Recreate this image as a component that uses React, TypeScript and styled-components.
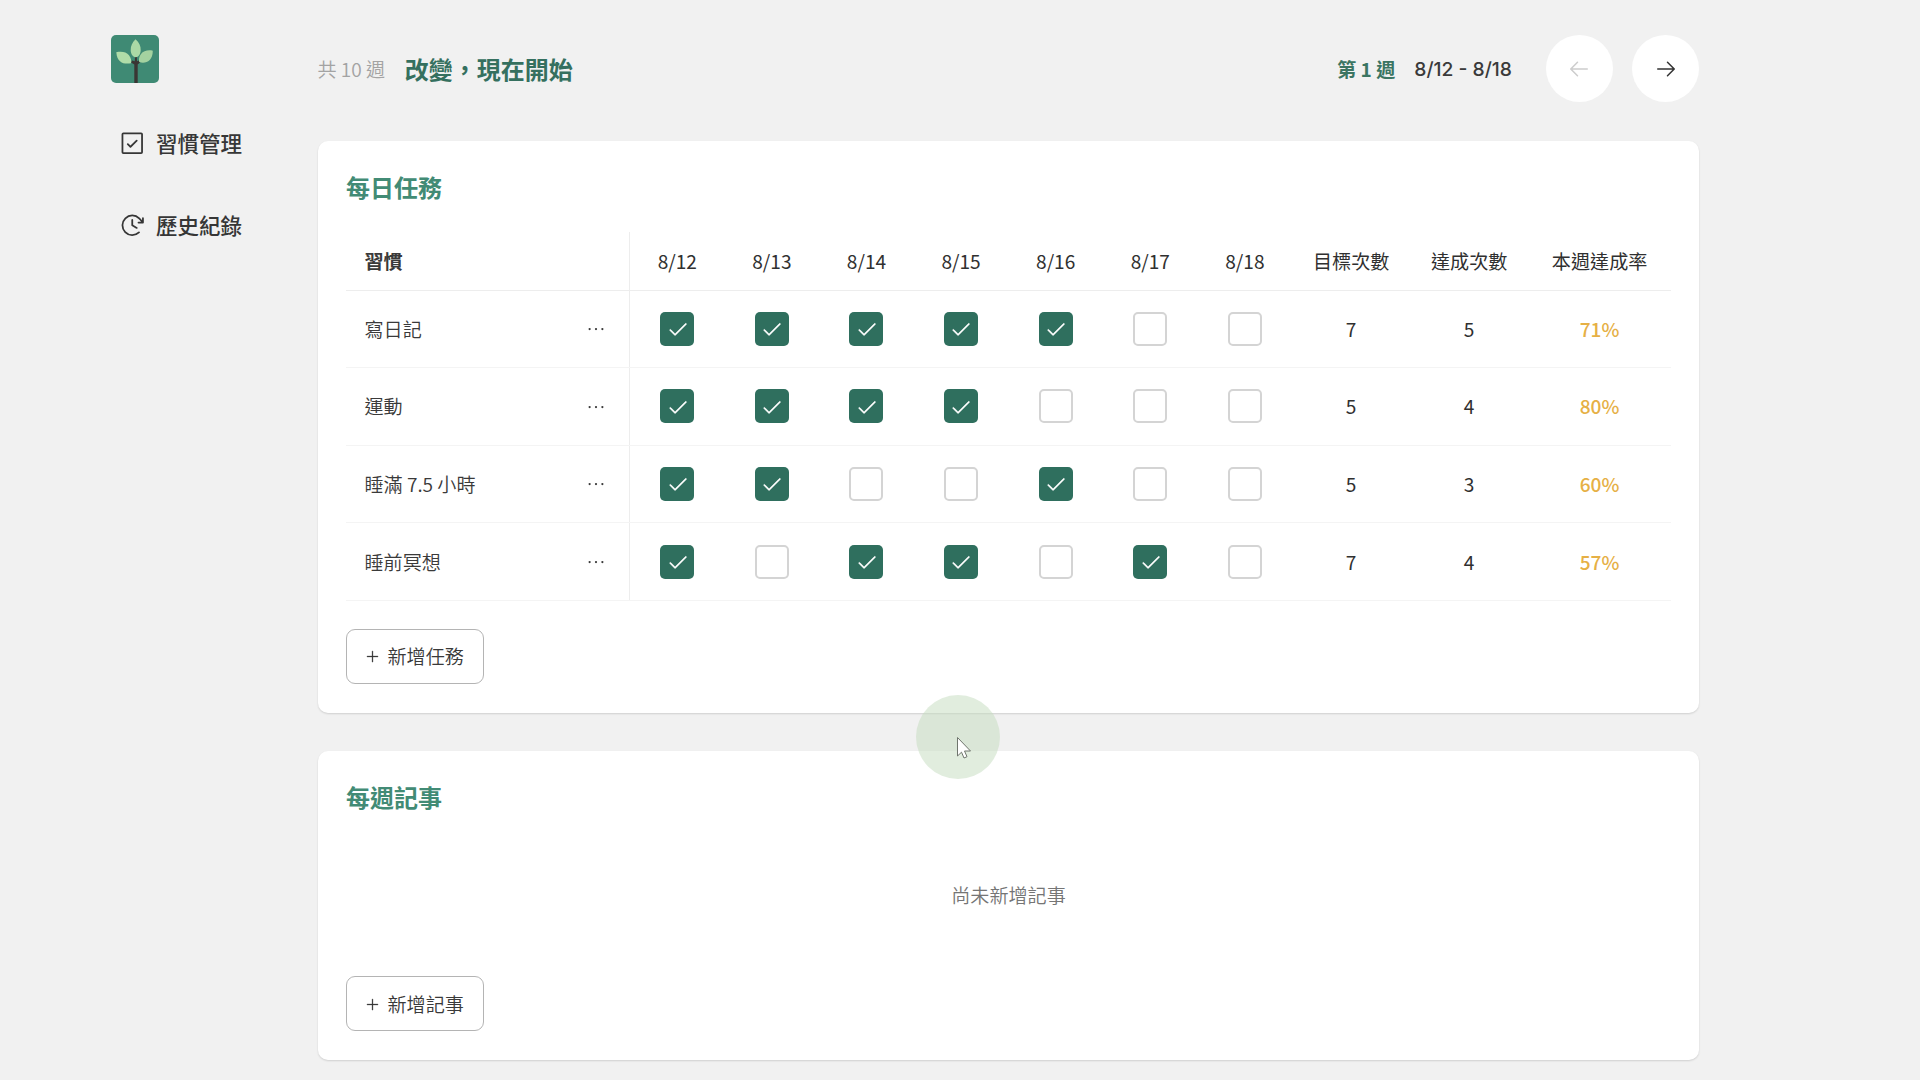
import React from "react";
import styled, { createGlobalStyle } from "styled-components";
import {
  PiArrowLeft,
  PiArrowRight,
  PiCheck,
  PiCheckSquare,
  PiClockClockwise,
  PiDotsThree,
  PiPlus,
} from "react-icons/pi";

const GlobalStyle = createGlobalStyle`
  * { box-sizing: border-box; }
  body {
    margin: 0;
    background: #f1f1f1;
    color: #3a3a3a;
    font-family: "Noto Sans CJK TC", "Noto Sans", sans-serif;
    font-size: 19.1px;
  }
`;

const Page = styled.div`
  position: relative;
  display: flex;
  width: 1920px;
  height: 1080px;
  overflow: hidden;
`;

const Sidebar = styled.aside`
  display: flex;
  flex-direction: column;
  width: 317.5px;
  padding: 35px 0 0 110.5px;
`;

const Logo = styled.svg`
  display: block;
  width: 48px;
  height: 48px;
  border-radius: 5px;
`;

const NavList = styled.nav`
  display: flex;
  flex-direction: column;
  gap: 42px;
  margin-top: 40px;
  padding-left: 7.5px;
`;

const NavItem = styled.a`
  display: flex;
  align-items: center;
  gap: 9.5px;
  height: 40px;
  color: #363636;
  font-size: 21.5px;
  font-weight: 500;
  white-space: nowrap;

  svg {
    width: 28.5px;
    height: 28.5px;
  }
`;

const NavLabel = styled.span`
  padding-bottom: 2px;
`;

const Main = styled.main`
  display: flex;
  flex-direction: column;
  width: 1381.5px;
  padding-top: 35px;
`;

const TopBar = styled.header`
  display: flex;
  flex-shrink: 0;
  align-items: center;
  height: 67px;
  margin-bottom: 39px;
  white-space: nowrap;
`;

const WeekCount = styled.span`
  color: #a3a3a3;
  font-weight: 350;
`;

const PlanTitle = styled.h1`
  margin: 0 auto 0 19.5px;
  color: #35705f;
  font-size: 24px;
  font-weight: 700;
  line-height: 36px;
`;

const WeekLabel = styled.span`
  color: #3b7562;
  font-weight: 700;
`;

const WeekRange = styled.span`
  margin: 0 33.5px 0 19px;
  font-family: Inter, sans-serif;
  font-size: 19.3px;
  font-weight: 500;
`;

const RoundButton = styled.button<{ $muted?: boolean }>`
  display: grid;
  place-items: center;
  width: 67px;
  height: 67px;
  margin-right: ${(p) => (p.$muted ? "19.5px" : "0")};
  padding: 0;
  border: 0;
  border-radius: 50%;
  background: #fff;
  color: ${(p) => (p.$muted ? "#cdcdcd" : "#333")};

  svg {
    width: 24px;
    height: 24px;
  }
`;

const Card = styled.section<{ $height: number }>`
  display: flex;
  flex-direction: column;
  flex-shrink: 0;
  align-items: flex-start;
  height: ${(p) => p.$height}px;
  margin-bottom: 38px;
  padding: 28px 28px 28px 28.5px;
  border-radius: 10px;
  background: #fff;
  box-shadow: 0 1px 2px rgba(0, 0, 0, 0.14);
`;

const CardTitle = styled.h2`
  margin: 0;
  color: #428b75;
  font-size: 24px;
  font-weight: 700;
  line-height: 36px;
`;

const Table = styled.div`
  width: 1325px;
  margin: 27px 0 28px;
`;

const Row = styled.div<{ $head?: boolean }>`
  display: grid;
  grid-template-columns: 284px repeat(7, 94.6px) 118px 118px 1fr;
  height: ${(p) => (p.$head ? "58.5px" : "77.6px")};
  border-bottom: 1px solid ${(p) => (p.$head ? "#ededed" : "#f4f4f4")};
`;

const NameCell = styled.div<{ $bold?: boolean }>`
  display: flex;
  align-items: center;
  justify-content: space-between;
  padding: 0 21.5px 0 18.5px;
  border-right: 1px solid #ededed;
  font-weight: ${(p) => (p.$bold ? 700 : 350)};

  svg {
    width: 24px;
    height: 24px;
    margin-top: 1px;
  }
`;

const Cell = styled.div<{ $rate?: boolean }>`
  display: flex;
  align-items: center;
  justify-content: center;
  font-weight: ${(p) => (p.$rate ? 500 : 400)};
  color: ${(p) => (p.$rate ? "#e6b045" : "#303030")};
`;

const Checkbox = styled.span<{ $checked: boolean }>`
  display: grid;
  place-items: center;
  width: 34px;
  height: 34px;
  border: ${(p) => (p.$checked ? "0" : "2px solid #d4d4d4")};
  border-radius: 5px;
  background: ${(p) => (p.$checked ? "#2f6f5e" : "#fff")};
  color: #fff;

  svg {
    width: 21.5px;
    height: 21.5px;
    stroke: currentColor;
    stroke-width: 5px;
  }
`;

const AddButton = styled.button`
  display: flex;
  align-items: center;
  gap: 8px;
  width: 138px;
  height: 55px;
  padding: 0 0 0 17.5px;
  border: 1px solid #b4b4b4;
  border-radius: 9px;
  background: #fff;
  color: #3a3a3a;
  font: inherit;
  font-weight: 350;
  white-space: nowrap;

  svg {
    width: 15px;
    height: 15px;
    margin-top: 1px;
    stroke: currentColor;
    stroke-width: 5px;
  }
`;

const EmptyNote = styled.p`
  align-self: center;
  margin: 66px 0 67px;
  color: #757575;
  font-weight: 350;
  line-height: 28px;
`;

const PointerHalo = styled.div`
  position: absolute;
  left: 916px;
  top: 695px;
  width: 84px;
  height: 84px;
  border-radius: 50%;
  background: rgba(196, 219, 190, 0.5);
`;

const Pointer = styled.svg`
  position: absolute;
  left: 40px;
  top: 41px;
  width: 16px;
  height: 24px;
`;

const days = ["8/12", "8/13", "8/14", "8/15", "8/16", "8/17", "8/18"];

const habits = [
  { name: "寫日記", done: [1, 1, 1, 1, 1, 0, 0], goal: 7, count: 5, rate: "71%" },
  { name: "運動", done: [1, 1, 1, 1, 0, 0, 0], goal: 5, count: 4, rate: "80%" },
  { name: "睡滿 7.5 小時", done: [1, 1, 0, 0, 1, 0, 0], goal: 5, count: 3, rate: "60%" },
  { name: "睡前冥想", done: [1, 0, 1, 1, 0, 1, 0], goal: 7, count: 4, rate: "57%" },
];

function SproutLogo() {
  return (
    <Logo viewBox="0 0 48 48">
      <rect width="48" height="48" fill="#3f8a74" />
      <path d="M23.300 48V29.500L20 27.500l1-2 2.800.8L24 22h1.800l.2 4.300 2.500-1 .8 2-2.600 2.200V48z" fill="#3a3634" />
      <path d="M24.500 4.300c3.800 3 5.400 7 5.200 11-.2 4-2.200 7-4.900 7s-5-3-5.100-7c-.1-4 1.500-8 4.800-11z" fill="#abd9a6" />
      <path d="M5.300 17.200c5.500-1.200 10-.2 12.700 3 2 2.500 2.600 5.500 2 8-6 1.200-14 .3-14.700-11z" fill="#b0dca8" />
      <path d="M41.800 15.700c-5-1-9.300.2-11.800 3.300-2 2.500-2.400 5.500-1.800 8 6 2 13.600-.5 13.600-11.300z" fill="#a4d2a0" />
    </Logo>
  );
}

export default function App() {
  return (
    <>
      <GlobalStyle />
      <Page>
        <Sidebar>
          <SproutLogo />
          <NavList>
            <NavItem>
              <PiCheckSquare />
              <NavLabel>習慣管理</NavLabel>
            </NavItem>
            <NavItem>
              <PiClockClockwise />
              <NavLabel>歷史紀錄</NavLabel>
            </NavItem>
          </NavList>
        </Sidebar>
        <Main>
          <TopBar>
            <WeekCount>共 10 週</WeekCount>
            <PlanTitle>改變，現在開始</PlanTitle>
            <WeekLabel>第 1 週</WeekLabel>
            <WeekRange>8/12 - 8/18</WeekRange>
            <RoundButton $muted>
              <PiArrowLeft />
            </RoundButton>
            <RoundButton>
              <PiArrowRight />
            </RoundButton>
          </TopBar>
          <Card $height={572}>
            <CardTitle>每日任務</CardTitle>
            <Table>
              <Row $head>
                <NameCell $bold>習慣</NameCell>
                {days.map((day) => (
                  <Cell key={day}>{day}</Cell>
                ))}
                <Cell>目標次數</Cell>
                <Cell>達成次數</Cell>
                <Cell>本週達成率</Cell>
              </Row>
              {habits.map((habit) => (
                <Row key={habit.name}>
                  <NameCell>
                    {habit.name}
                    <PiDotsThree />
                  </NameCell>
                  {habit.done.map((done, i) => (
                    <Cell key={days[i]}>
                      <Checkbox $checked={!!done}>{done ? <PiCheck /> : null}</Checkbox>
                    </Cell>
                  ))}
                  <Cell>{habit.goal}</Cell>
                  <Cell>{habit.count}</Cell>
                  <Cell $rate>{habit.rate}</Cell>
                </Row>
              ))}
            </Table>
            <AddButton>
              <PiPlus />
              新增任務
            </AddButton>
          </Card>
          <Card $height={309}>
            <CardTitle>每週記事</CardTitle>
            <EmptyNote>尚未新增記事</EmptyNote>
            <AddButton>
              <PiPlus />
              新增記事
            </AddButton>
          </Card>
        </Main>
        <PointerHalo>
          <Pointer viewBox="0 0 16 24">
            <path
              d="M1.500 1.500v18.500l4-3.800 2.500 5.800 3-1.300-2.500-5.700h6z"
              fill="#fff"
              stroke="#6f756d"
              strokeWidth="1"
            />
          </Pointer>
        </PointerHalo>
      </Page>
    </>
  );
}
